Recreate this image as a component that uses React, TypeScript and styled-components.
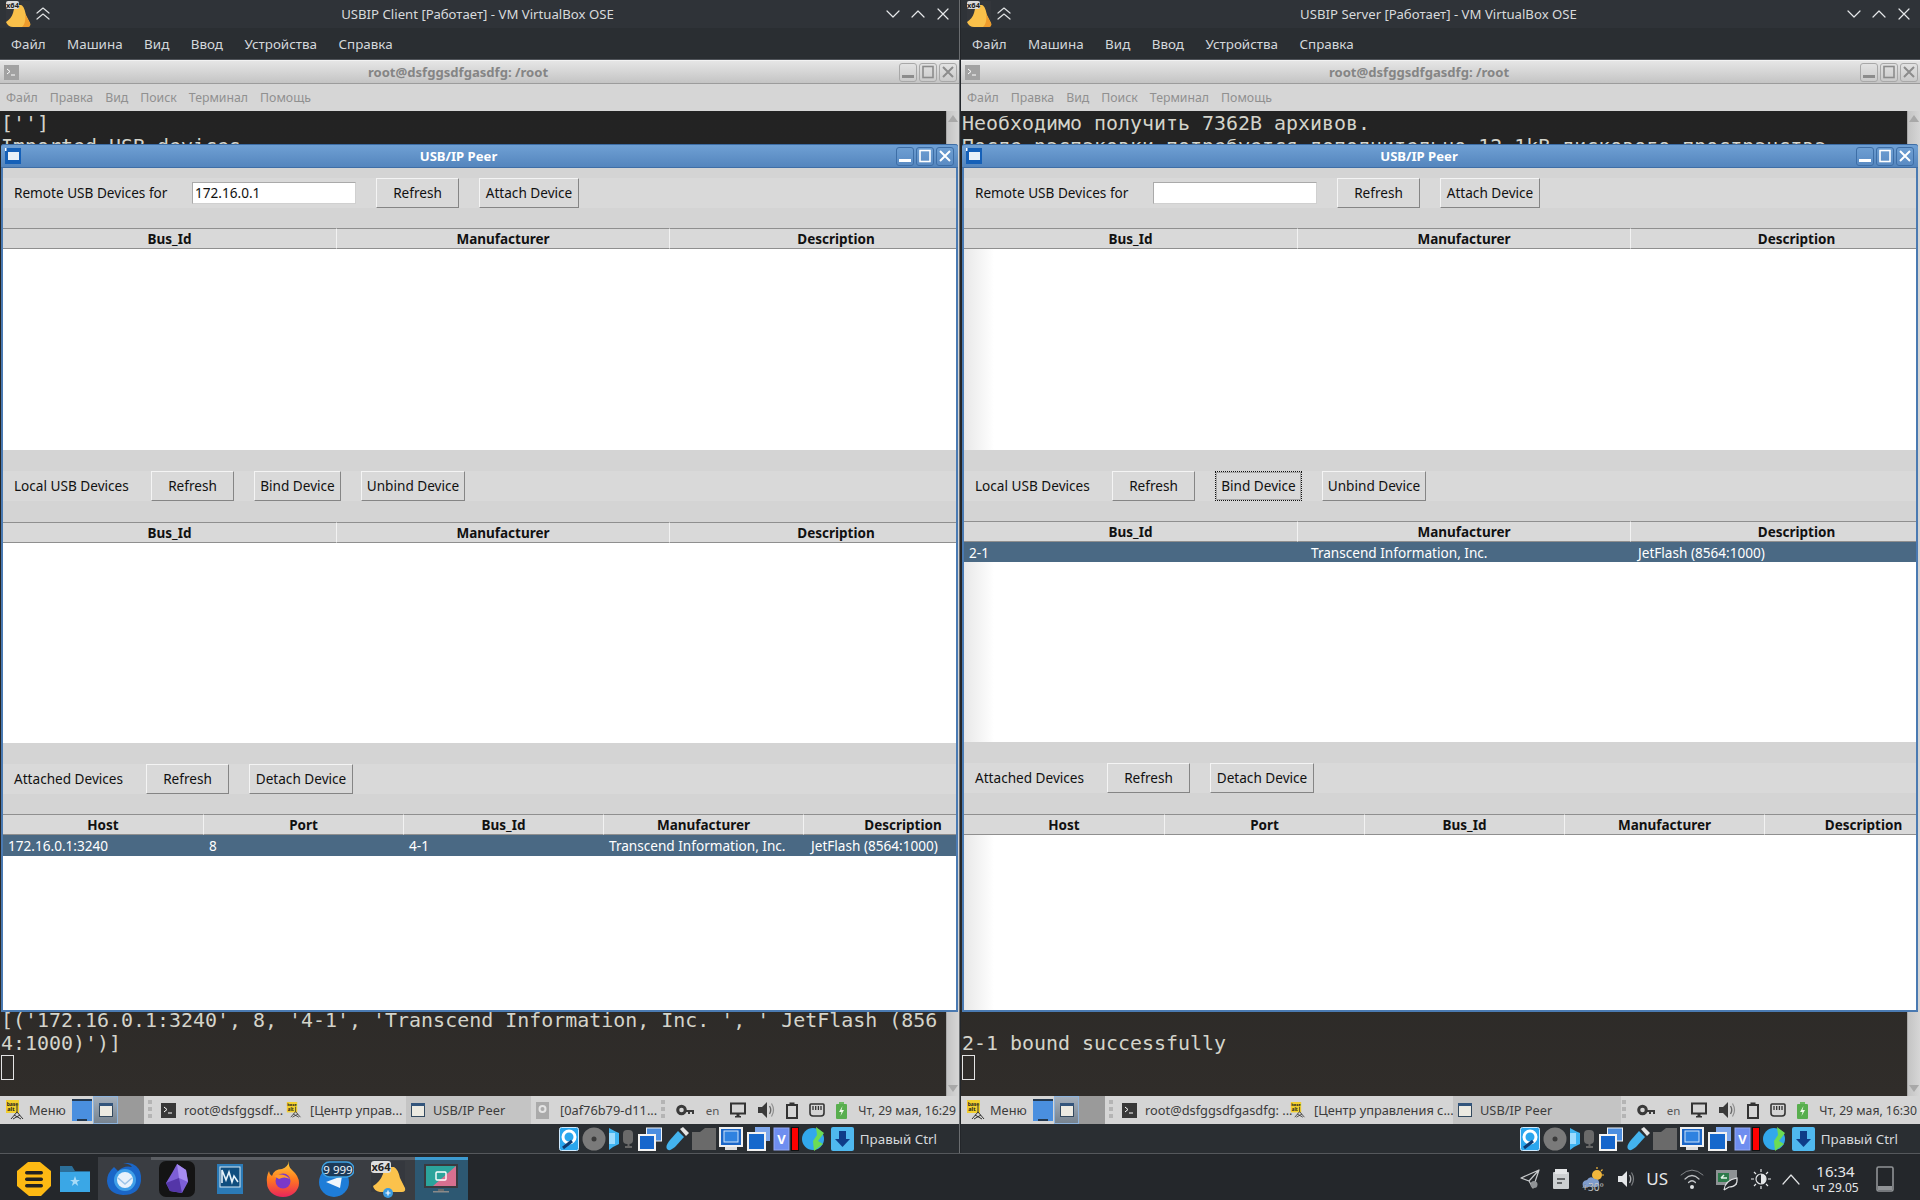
import React from 'react';
import styled, { createGlobalStyle } from 'styled-components';

const Global = createGlobalStyle`
  html, body { margin: 0; padding: 0; background: #23262a; }
  * { box-sizing: border-box; }
  body { font-family: "Noto Sans", "Liberation Sans", sans-serif; }
  svg { display: block; flex: none; }
`;

const Screen = styled.div`
  width: 1920px;
  height: 1200px;
  display: flex;
  flex-direction: column;
  overflow: hidden;
  background: #23262a;
`;
const Panes = styled.div`
  display: flex;
  gap: 1px;
  height: 1154px;
  border-bottom: 1px solid #55585c;
`;
const Pane = styled.div<{ $width: number; $divider?: boolean }>`
  position: relative;
  width: ${p => p.$width}px;
  display: flex;
  flex-direction: column;
  border-right: ${p => (p.$divider ? '1px solid #6a6d70' : 'none')};
`;
const VmTitleBar = styled.div`
  height: 28px;
  display: flex;
  align-items: center;
  padding: 0 8px 0 5px;
  background: #2f3338;
  color: #d8dadc;
  font-size: 13.2px;
`;
const VmTitle = styled.div`
  flex: 1;
  text-align: center;
  padding-left: 18px;
`;
const VmControls = styled.div`
  display: flex;
  gap: 11px;
  align-items: center;
  margin-right: 1px;
  color: #e6e8ea;
`;
const VmMenu = styled.div`
  height: 32px;
  display: flex;
  align-items: center;
  gap: 21.5px;
  padding: 1px 11px 0;
  background: #2a2e32;
  color: #d5d8dc;
  font-size: 13.4px;
  border-bottom: 1px solid #50545a;
`;
const TermTitleBar = styled.div`
  height: 24px;
  display: flex;
  align-items: center;
  padding: 0 2px 0 4px;
  background: linear-gradient(#e6e6e6, #c4c4c4);
  border-top: 1px solid #f2f2f2;
  border-bottom: 1px solid #9c9c9c;
  color: #858585;
  font-size: 13.1px;
  font-weight: 700;
`;
const TermTitle = styled.div`
  flex: 1;
  text-align: center;
  padding-right: 2px;
`;
const TermMenu = styled.div`
  height: 27px;
  display: flex;
  align-items: center;
  gap: 12px;
  padding: 0 6px;
  background: #d6d6d6;
  color: #909090;
  font-size: 12.3px;
`;
const Terminal = styled.div`
  flex: 1;
  min-height: 0;
  display: flex;
  background: linear-gradient(#232323 0%, #252423 60%, #302d2a 100%);
`;
const TermOutput = styled.div`
  flex: 1;
  display: flex;
  flex-direction: column;
  justify-content: space-between;
  padding: 1px 0 16px 1px;
  color: #d4d4cb;
  font-family: "DejaVu Sans Mono", "Liberation Mono", monospace;
  font-size: 19.95px;
  line-height: 23px;
  white-space: pre;
  overflow: hidden;
`;
const Cursor = styled.div`
  width: 13px;
  height: 25px;
  border: 1px solid #e4e4e4;
`;
const TermScroll = styled.div`
  width: 13px;
  display: flex;
  flex-direction: column;
  justify-content: space-between;
  align-items: center;
  padding: 4px 0;
  background: linear-gradient(90deg, #c4c4c4, #d6d6d6);
  border-left: 1px solid #a8a8a8;
`;
const PeerWindow = styled.section<{ $width: number }>`
  position: absolute;
  top: 144px;
  left: 1px;
  width: ${p => p.$width}px;
  height: 868px;
  display: flex;
  flex-direction: column;
  border: 2px solid #4a7ab2;
  border-top: 0;
  border-radius: 3px 3px 0 0;
  background: #d4d4d4;
`;
const PeerTitleBar = styled.div`
  height: 24px;
  margin: 0 -2px;
  display: flex;
  align-items: center;
  padding: 0 4px 0 4px;
  background: linear-gradient(#6fa0d4, #5485bd);
  border-top: 1px solid #3e6ea6;
  border-bottom: 1px solid #3f6ea6;
  border-radius: 3px 3px 0 0;
  color: #fff;
  font-size: 13.1px;
  font-weight: 700;
`;
const PeerTitle = styled.div`
  flex: 1;
  text-align: center;
  padding-right: 2px;
`;
const Controls = styled.div`
  display: flex;
  gap: 2px;
`;
const WinButton = styled.div<{ $tone: 'blue' | 'grey' }>`
  width: 18px;
  height: 19px;
  display: flex;
  align-items: center;
  justify-content: center;
  border-radius: 3px;
  border: 1px solid ${p => (p.$tone === 'blue' ? '#3e6ea6' : '#a8a8a8')};
  background: ${p => (p.$tone === 'blue' ? 'linear-gradient(#6d9ed2,#5a8bc3)' : 'linear-gradient(#e2e2e2,#cacaca)')};
`;
const Section = styled.div<{ $top: number; $gap: number; $fill?: boolean }>`
  padding-top: ${p => p.$top}px;
  flex: ${p => (p.$fill ? '1' : 'none')};
  display: flex;
  flex-direction: column;
  & > header { margin-bottom: ${p => p.$gap}px; }
`;
const Toolbar = styled.header`
  height: 30px;
  display: flex;
  align-items: center;
  gap: 20px;
  padding-left: 11px;
  background: #d9d9d9;
  font-size: 13.6px;
  color: #111;
`;
const ToolLabel = styled.span<{ $width: number }>`
  width: ${p => p.$width}px;
  margin: -2px -20px 0 0;
  white-space: nowrap;
`;
const AddressInput = styled.div`
  width: 164px;
  height: 22px;
  padding-left: 2px;
  line-height: 19px;
  background: #fff;
  border: 1px solid #d0d0d0;
  border-top-color: #aaa;
  border-left-color: #aaa;
`;
const ToolButton = styled.button<{ $width: number; $focused?: boolean }>`
  width: ${p => p.$width}px;
  height: 30px;
  padding: 0 0 2px;
  background: #d9d9d9;
  border: 1px solid;
  border-color: #f4f4f4 #858585 #858585 #f4f4f4;
  color: #111;
  font: inherit;
  white-space: nowrap;
  ${p => p.$focused && `
    border: 1px dotted #111;
    box-shadow: inset 0 0 0 1px #a8a8a8;
  `}
`;
const Table = styled.div<{ $bodyHeight?: number }>`
  display: flex;
  flex-direction: column;
  flex: ${p => (p.$bodyHeight ? 'none' : '1')};
  height: ${p => (p.$bodyHeight ? `${p.$bodyHeight + 21}px` : 'auto')};
`;
const Row = styled.div<{ $cols: string }>`
  display: grid;
  grid-template-columns: ${p => p.$cols};
`;
const HeadCell = styled.div`
  height: 21px;
  padding-top: 1px;
  line-height: 19px;
  text-align: center;
  font-size: 13.5px;
  font-weight: 700;
  color: #111;
  background: #d9d9d9;
  border-top: 1px solid #8f8f8f;
  border-bottom: 1px solid #8f8f8f;
  border-right: 1px solid #f2f2f2;
  &:last-child { padding-left: 46px; border-right: 0; }
`;
const TableBody = styled.div<{ $shade?: boolean }>`
  flex: 1;
  background: ${p => (p.$shade ? 'linear-gradient(90deg, #e8e8e8 0, #fff 30px)' : '#fff')};
`;
const SelectedRow = styled(Row)<{ $height: number }>`
  height: ${p => p.$height}px;
  align-items: center;
  background: #4a6984;
  color: #fff;
  font-size: 13.6px;
`;
const Cell = styled.div<{ $indent: number }>`
  padding-left: ${p => p.$indent}px;
  white-space: nowrap;
`;
const TaskPanel = styled.div`
  height: 28px;
  display: flex;
  align-items: center;
  background: #d5d5d5;
  color: #3c3c3c;
  font-size: 12.8px;
`;
const StartButton = styled.div`
  display: flex;
  align-items: center;
  gap: 4px;
  padding-left: 5px;
  width: 71px;
`;
const DesktopSwitch = styled.div<{ $active?: boolean }>`
  width: ${p => (p.$active ? 25 : 22)}px;
  height: 28px;
  display: flex;
  align-items: center;
  justify-content: center;
  background: ${p => (p.$active ? 'linear-gradient(#a3afbc,#77838f)' : 'transparent')};
  border: ${p => (p.$active ? '1px solid #8fb4dc' : '0')};
`;
const PagerGap = styled.div`
  width: 26px;
  height: 28px;
  background: #9a9a9a;
`;
const Handle = styled.div<{ $margin: number }>`
  width: 4px;
  height: 20px;
  margin: 0 ${p => p.$margin}px;
  background: repeating-linear-gradient(#b4b4b4 0 4px, transparent 4px 7px);
`;
const Task = styled.div<{ $width: number; $active?: boolean }>`
  width: ${p => p.$width}px;
  height: 28px;
  display: flex;
  align-items: center;
  gap: 8px;
  padding-left: 5px;
  white-space: nowrap;
  background: ${p => (p.$active ? '#c4c4c4' : 'transparent')};
`;
const Tray = styled.div`
  display: flex;
  align-items: center;
  gap: 11px;
  flex: 1;
  justify-content: flex-end;
  padding-right: 3px;
`;
const TrayLang = styled.span`
  font-size: 11.5px;
  color: #555;
`;
const TrayClock = styled.span`
  font-size: 12.2px;
  white-space: nowrap;
`;
const VmStatus = styled.div`
  height: 29px;
  flex: none;
  display: flex;
  align-items: center;
  justify-content: flex-end;
  gap: 3px;
  padding-right: 22px;
  background: #2a2e32;
  color: #d6d9dc;
  font-size: 13.4px;
`;
const HostKey = styled.span`
  margin-left: 3px;
  white-space: nowrap;
`;
const Dock = styled.footer`
  height: 45px;
  margin-top: 1px;
  display: flex;
  align-items: center;
  padding: 2px 0 0 0;
  background: #24272b;
`;
const DockStart = styled.div`
  width: 98px;
  height: 43px;
  padding-left: 16px;
  display: flex;
  align-items: center;
  gap: 8px;
`;
const DockTab = styled.div<{ $state?: 'open' | 'hover' | 'active' }>`
  width: 52.8px;
  height: 43px;
  display: flex;
  align-items: center;
  justify-content: center;
  padding-bottom: 3px;
  background: ${p => (p.$state === 'active' ? '#2d5872' : p.$state ? '#3a3d42' : 'transparent')};
  border-top: 3px solid ${p => (p.$state === 'active' ? '#3d9ad0' : p.$state === 'open' ? '#5b5e63' : 'transparent')};
`;
const HostTray = styled.div`
  flex: 1;
  display: flex;
  align-items: center;
  justify-content: flex-end;
  gap: 11.5px;
  padding-right: 26px;
  color: #e4e6e8;
`;
const HostLayout = styled.span`
  font-size: 17px;
`;
const HostClock = styled.div`
  width: 66px;
  margin: 0 -4px 0 -9px;
  text-align: center;
  line-height: 14px;
`;
const HostTime = styled.div`
  font-size: 15px;
  line-height: 19px;
`;
const HostDate = styled.div`
  font-size: 12px;
`;

const line = { fill: 'none', stroke: 'currentColor', strokeWidth: 1.5, strokeLinecap: 'round', strokeLinejoin: 'round' } as const;

const VBoxBlob = ({ size = 28 }: { size?: number }) => (
  <svg width={size} height={size} viewBox="0 0 28 28">
    <rect x="1" y="1" width="24" height="26" fill="#33363b" />
    <path d="M10 5 h6 c3 1 4 6 5 10 l4 8 c1 3 -1 4 -3 4 h-14 c-3 0 -6 -2 -7 -5 c3 -2 6 -5 7 -9z" fill="#f9c04a" />
    <path d="M20 14 l5 9 c1 3 -1 4 -3 4 h-5 c3 -3 4 -8 3 -13z" fill="#ee9b2c" />
    <rect x="1" y="1" width="13" height="8" rx="2" fill="#d9d9d9" />
    <text x="7.5" y="7.6" textAnchor="middle" fontSize="7.5" fontWeight="700" fontFamily="Noto Sans" fill="#222">x64</text>
  </svg>
);
const DoubleUp = () => (
  <svg width="16" height="16" viewBox="0 0 16 16" style={{ marginLeft: 2, color: '#dfe1e3' }}>
    <path d="M2 7 L8 2 L14 7 M2 13 L8 8 L14 13" {...line} strokeWidth={1.2} />
  </svg>
);
const VmButtons = () => (
  <VmControls>
    <svg width="14" height="14" viewBox="0 0 14 14"><path d="M1 4 L7 10 L13 4" {...line} strokeWidth={1.2} /></svg>
    <svg width="14" height="14" viewBox="0 0 14 14"><path d="M1 10 L7 4 L13 10" {...line} strokeWidth={1.2} /></svg>
    <svg width="14" height="14" viewBox="0 0 14 14"><path d="M2 2 L12 12 M12 2 L2 12" {...line} strokeWidth={1.2} /></svg>
  </VmControls>
);
const PeerIcon = () => (
  <svg width="16" height="16" viewBox="0 0 16 16" style={{ marginRight: 2 }}>
    <rect width="16" height="16" fill="#1560b8" />
    <rect x="3" y="4" width="11" height="8" fill="#e8f0f8" />
    <rect y="0" width="1.5" height="3" fill="#fff" />
  </svg>
);
const TermIcon = ({ color = '#a2a2a2' }: { color?: string }) => (
  <svg width="15" height="15" viewBox="0 0 15 15">
    <rect width="15" height="15" fill={color} />
    <path d="M3 4 L6 6.5 L3 9 M7 10 H11" fill="none" stroke="#fff" strokeWidth="1" />
  </svg>
);
const WinGlyph = ({ kind, color }: { kind: 'min' | 'max' | 'close'; color: string }) => (
  <svg width="14" height="14" viewBox="0 0 14 14">
    {kind === 'min' && <rect x="1" y="10" width="12" height="3" fill={color} />}
    {kind === 'max' && <rect x="2" y="1.5" width="10" height="11" fill="none" stroke={color} strokeWidth="1.6" />}
    {kind === 'close' && <path d="M2 2 L12 12 M12 2 L2 12" stroke={color} strokeWidth="2" />}
  </svg>
);
const WinControls = ({ tone }: { tone: 'blue' | 'grey' }) => {
  const color = tone === 'blue' ? '#fff' : '#8c8c8c';
  return (
    <Controls>
      <WinButton $tone={tone}><WinGlyph kind="min" color={color} /></WinButton>
      <WinButton $tone={tone}><WinGlyph kind="max" color={color} /></WinButton>
      <WinButton $tone={tone}><WinGlyph kind="close" color={color} /></WinButton>
    </Controls>
  );
};
const BaseAlt = ({ size = 20 }: { size?: number }) => (
  <svg width={size} height={size} viewBox="0 0 20 20">
    <rect x="1" y="0" width="13" height="13" fill="#f2cf2e" />
    <text x="7.5" y="5.5" textAnchor="middle" fontSize="5" fontWeight="700" fontFamily="Noto Sans" fill="#222">base</text>
    <text x="6" y="11" textAnchor="middle" fontSize="5.5" fontWeight="700" fontFamily="Noto Sans" fill="#222">alt</text>
    <path d="M12 6 V12 M12 12 L6 19 M12 12 L18 19 M9 15 L16 19 M15 15 L8 19" stroke="#333" strokeWidth="1" fill="none" />
  </svg>
);
const PagerDesktop = () => (
  <svg width="20" height="22" viewBox="0 0 20 22">
    <rect width="20" height="22" fill="#4a8fdf" />
    <rect width="20" height="2" fill="#23384f" />
    <rect x="5" y="20" width="10" height="2" fill="#23384f" />
  </svg>
);
const PagerWindow = () => (
  <svg width="14" height="14" viewBox="0 0 14 14">
    <rect x="0.5" y="0.5" width="13" height="13" fill="#eceae2" stroke="#33495f" />
    <rect x="0" y="0" width="14" height="3" fill="#33557c" />
  </svg>
);
const KeyIcon = () => (
  <svg width="19" height="12" viewBox="0 0 19 12">
    <circle cx="5.5" cy="6" r="3.8" fill="none" stroke="#3a3a3a" strokeWidth="3" />
    <path d="M9 6 H18 V10 H16 V8 H14 V10 H12 V8 H9z" fill="#3a3a3a" />
  </svg>
);
const MonitorIcon = () => (
  <svg width="16" height="16" viewBox="0 0 16 16">
    <rect x="1" y="1.5" width="14" height="10" fill="none" stroke="#333" strokeWidth="2" />
    <rect x="6.5" y="12" width="3" height="2" fill="#333" /><rect x="5" y="14" width="6" height="1.5" fill="#333" />
  </svg>
);
const SpeakerIcon = ({ color = '#3a3a3a' }: { color?: string }) => (
  <svg width="18" height="20" viewBox="0 0 18 20">
    <path d="M1 7 H5 L10 2 V18 L5 13 H1z" fill={color} />
    <path d="M12.5 6 Q15 10 12.5 14" fill="none" stroke={color} strokeOpacity=".7" strokeWidth="1.4" />
    <path d="M14.5 3.5 Q18.5 10 14.5 16.5" fill="none" stroke={color} strokeOpacity=".45" strokeWidth="1.2" />
  </svg>
);
const ClipIcon = () => (
  <svg width="12" height="17" viewBox="0 0 12 17">
    <rect x="1" y="3" width="10" height="13" fill="none" stroke="#333" strokeWidth="2" />
    <rect x="3.5" y="0.5" width="5" height="3.5" fill="#333" />
  </svg>
);
const NetIcon = () => (
  <svg width="16" height="15" viewBox="0 0 16 15">
    <path d="M2 1 H14 Q15 1 15 2 V10 Q15 13 12 13 H4 Q1 13 1 10 V2 Q1 1 2 1z" fill="none" stroke="#333" strokeWidth="1.6" />
    <path d="M4 3 V7 M6.7 3 V7 M9.4 3 V7 M12 3 V7" stroke="#333" strokeWidth="1.3" />
  </svg>
);
const BatteryIcon = () => (
  <svg width="11" height="17" viewBox="0 0 11 17">
    <rect x="3" y="0" width="5" height="2" fill="#6cbb62" />
    <rect x="0" y="2" width="11" height="15" rx="1" fill="#58ae4e" />
    <path d="M6.5 4 L3 10 H5.5 L4.5 14 L8 8 H5.5z" fill="#f0f8ea" />
  </svg>
);

const HddIcon = () => (
  <svg width="20" height="24" viewBox="0 0 20 24">
    <rect x="0.5" y="0.5" width="19" height="23" rx="2" fill="#2aa6ee" stroke="#cfeaff" />
    <circle cx="10" cy="10" r="6" fill="none" stroke="#fff" strokeWidth="3" />
    <path d="M13 14 L4 21" stroke="#113a70" strokeWidth="3" />
  </svg>
);
const DiscIcon = () => (
  <svg width="24" height="24" viewBox="0 0 24 24">
    <circle cx="12" cy="12" r="11.5" fill="#7a7a7a" />
    <circle cx="12" cy="12" r="2.5" fill="#3a3a3a" />
  </svg>
);
const AudioIcon = () => (
  <svg width="26" height="24" viewBox="0 0 26 24">
    <rect x="14" y="3" width="10" height="14" rx="4" fill="#6a6a6a" />
    <path d="M16 20 H23 M19.5 17 V20" stroke="#666" strokeWidth="2" />
    <path d="M0 1 Q7 5 10 6 V17 Q5 19 0 23z" fill="#3fb4f2" />
    <rect x="0" y="6" width="6" height="11" fill="#9ddcff" />
  </svg>
);
const WindowsIcon = () => (
  <svg width="24" height="24" viewBox="0 0 24 24">
    <rect x="8.5" y="1" width="15" height="13" fill="#4c8ee0" stroke="#f0f4f8" />
    <rect x="1" y="8" width="16" height="15" fill="#1666cc" stroke="#f4f4f4" strokeWidth="2" />
  </svg>
);
const UsbIcon = () => (
  <svg width="24" height="24" viewBox="0 0 24 24">
    <path d="M13 4 L19 10 L10 20 Q4 25 2 22 Q0 19 5 13z" fill="#43b3ee" />
    <path d="M15 2 L18 0 L24 6 L21 9z" fill="#e4e4e4" />
  </svg>
);
const FolderIcon = () => (
  <svg width="24" height="24" viewBox="0 0 24 24">
    <path d="M0 5 L8 5 L13 1 H24 V23 H0z" fill="#6a6a6a" />
  </svg>
);
const DisplayIcon = () => (
  <svg width="24" height="24" viewBox="0 0 24 24">
    <rect x="1" y="1" width="22" height="18" fill="#1a66c8" stroke="#f0f0f0" strokeWidth="2" />
    <rect x="5" y="4" width="14" height="11" fill="#2f82e0" stroke="#cfe4fa" />
    <rect x="6" y="20" width="12" height="3" fill="#ddd" />
  </svg>
);
const CaptureIcon = () => (
  <svg width="24" height="24" viewBox="0 0 24 24">
    <rect x="9" y="0" width="15" height="14" fill="#7fa8ec" />
    <rect x="2" y="6" width="17" height="17" fill="#1668cc" stroke="#f2f2f2" strokeWidth="2" />
  </svg>
);
const VtIcon = () => (
  <svg width="26" height="24" viewBox="0 0 26 24">
    <rect x="1" y="1" width="15" height="22" fill="#6f8ef0" stroke="#94a8f4" />
    <text x="8.5" y="17" textAnchor="middle" fontSize="13" fontWeight="700" fontFamily="Noto Sans" fill="#fff">V</text>
    <rect x="18.5" y="0.5" width="7" height="23" fill="#f00" stroke="#111" />
  </svg>
);
const SwirlIcon = () => (
  <svg width="26" height="24" viewBox="0 0 26 24">
    <circle cx="11" cy="12" r="11" fill="#32a8ec" />
    <path d="M14 0 L22 6 L16 14 L21 17 L12 24 L11 14 L15 8z" fill="#6cdc54" />
  </svg>
);
const DownloadIcon = () => (
  <svg width="23" height="24" viewBox="0 0 23 24">
    <rect width="23" height="24" rx="2" fill="#4fb8ee" />
    <path d="M8 4 H15 V12 H19 L11.5 20 L4 12 H8z" fill="#0e3c88" />
  </svg>
);

const StatusIcons = () => (
  <>
    <HddIcon /><DiscIcon /><AudioIcon /><WindowsIcon /><UsbIcon /><FolderIcon />
    <DisplayIcon /><CaptureIcon /><VtIcon /><SwirlIcon /><DownloadIcon />
  </>
);

const ShortTable = ({ cols, headers, selected, indents, bodyHeight, shade, rowHeight = 21 }: {
  cols: string;
  headers: string[];
  selected?: string[];
  indents?: number[];
  bodyHeight?: number;
  shade?: boolean;
  rowHeight?: number;
}) => (
  <Table $bodyHeight={bodyHeight}>
    <Row $cols={cols}>
      {headers.map(h => <HeadCell key={h}>{h}</HeadCell>)}
    </Row>
    {selected && (
      <SelectedRow $cols={cols} $height={rowHeight}>
        {selected.map((c, i) => <Cell key={c} $indent={indents ? indents[i] : 5}>{c}</Cell>)}
      </SelectedRow>
    )}
    <TableBody $shade={shade} />
  </Table>
);

const threeHeaders = ['Bus_Id', 'Manufacturer', 'Description'];
const fiveHeaders = ['Host', 'Port', 'Bus_Id', 'Manufacturer', 'Description'];
const threeCols = '334px 333px 1fr';
const fiveCols = '201px 200px 200px 200px 1fr';

type PaneConfig = {
  side: 'client' | 'server';
  title: string;
  lastTime: string;
  topLines: string[];
  bottomLines: string[];
  address: string;
  tasks: { label: string; icon: 'term' | 'base' | 'win' | 'disk'; active?: boolean }[];
  taskWidth: number;
};

const TaskIcon = ({ kind }: { kind: string }) => {
  if (kind === 'term') return <TermIcon color="#383838" />;
  if (kind === 'base') return <BaseAlt size={16} />;
  if (kind === 'win') return <PagerWindow />;
  return (
    <svg width="13" height="17" viewBox="0 0 13 17" style={{ marginRight: 3 }}>
      <rect width="13" height="17" fill="#aaa" />
      <circle cx="6.5" cy="7" r="3" fill="none" stroke="#e4e4e4" strokeWidth="2" />
    </svg>
  );
};

const VmPane = ({ cfg }: { cfg: PaneConfig }) => {
  const server = cfg.side === 'server';
  return (
    <Pane $width={server ? 959 : 960} $divider={!server}>
      <VmTitleBar>
        <VBoxBlob />
        <DoubleUp />
        <VmTitle>{cfg.title}</VmTitle>
        <VmButtons />
      </VmTitleBar>
      <VmMenu>
        {['Файл', 'Машина', 'Вид', 'Ввод', 'Устройства', 'Справка'].map(m => <span key={m}>{m}</span>)}
      </VmMenu>
      <TermTitleBar>
        <TermIcon />
        <TermTitle>root@dsfggsdfgasdfg: /root</TermTitle>
        <WinControls tone="grey" />
      </TermTitleBar>
      <TermMenu>
        {['Файл', 'Правка', 'Вид', 'Поиск', 'Терминал', 'Помощь'].map(m => <span key={m}>{m}</span>)}
      </TermMenu>
      <Terminal>
        <TermOutput>
          <div>{cfg.topLines.map(l => <div key={l}>{l}</div>)}</div>
          <div>
            {cfg.bottomLines.map((l, i) => <div key={i}>{l || ' '}</div>)}
            <Cursor />
          </div>
        </TermOutput>
        <TermScroll>
          <svg width="10" height="7" viewBox="0 0 10 7"><path d="M5 0 L10 7 H0z" fill="#a8a8a8" /></svg>
          <svg width="10" height="7" viewBox="0 0 10 7"><path d="M5 7 L10 0 H0z" fill="#a8a8a8" /></svg>
        </TermScroll>
      </Terminal>
      <TaskPanel>
        <StartButton><BaseAlt /><span>Меню</span></StartButton>
        <DesktopSwitch><PagerDesktop /></DesktopSwitch>
        <DesktopSwitch $active><PagerWindow /></DesktopSwitch>
        <PagerGap />
        <Handle $margin={4} />
        {cfg.tasks.map(t => (
          <Task key={t.label} $width={cfg.taskWidth} $active={t.active}>
            <TaskIcon kind={t.icon} />
            <span>{t.label}</span>
          </Task>
        ))}
        <Tray>
          <Handle $margin={0} />
          <KeyIcon />
          <TrayLang>en</TrayLang>
          <MonitorIcon />
          <SpeakerIcon />
          <ClipIcon />
          <NetIcon />
          <BatteryIcon />
          <TrayClock>{cfg.lastTime}</TrayClock>
        </Tray>
      </TaskPanel>
      <VmStatus>
        <StatusIcons />
        <HostKey>Правый Ctrl</HostKey>
      </VmStatus>
      <PeerWindow $width={server ? 956 : 957}>
        <PeerTitleBar>
          <PeerIcon />
          <PeerTitle>USB/IP Peer</PeerTitle>
          <WinControls tone="blue" />
        </PeerTitleBar>
        <Section $top={10} $gap={20}>
          <Toolbar>
            <ToolLabel $width={178}>Remote USB Devices for</ToolLabel>
            <AddressInput>{cfg.address}</AddressInput>
            <ToolButton $width={83}>Refresh</ToolButton>
            <ToolButton $width={100}>Attach Device</ToolButton>
          </Toolbar>
          <ShortTable cols={threeCols} headers={threeHeaders} bodyHeight={201} shade={server} />
        </Section>
        <Section $top={21} $gap={server ? 20 : 21}>
          <Toolbar>
            <ToolLabel $width={137}>Local USB Devices</ToolLabel>
            <ToolButton $width={83}>Refresh</ToolButton>
            <ToolButton $width={87} $focused={server}>Bind Device</ToolButton>
            <ToolButton $width={104}>Unbind Device</ToolButton>
          </Toolbar>
          <ShortTable
            cols={threeCols}
            headers={threeHeaders}
            bodyHeight={200}
            shade={server}
            rowHeight={server ? 20 : 21}
            selected={server ? ['2-1', 'Transcend Information, Inc.', 'JetFlash (8564:1000)'] : undefined}
            indents={[5, 13, 7]}
          />
        </Section>
        <Section $top={21} $gap={server ? 21 : 20} $fill>
          <Toolbar>
            <ToolLabel $width={132}>Attached Devices</ToolLabel>
            <ToolButton $width={83}>Refresh</ToolButton>
            <ToolButton $width={104}>Detach Device</ToolButton>
          </Toolbar>
          <ShortTable
            cols={fiveCols}
            headers={fiveHeaders}
            shade={server}
            selected={server ? undefined : ['172.16.0.1:3240', '8', '4-1', 'Transcend Information, Inc.', 'JetFlash (8564:1000)']}
            indents={[5, 5, 5, 5, 7]}
          />
        </Section>
      </PeerWindow>
    </Pane>
  );
};

const clientPane: PaneConfig = {
  side: 'client',
  title: 'USBIP Client [Работает] - VM VirtualBox OSE',
  lastTime: 'Чт, 29 мая, 16:29',
  topLines: ["['']", 'Imported USB devices'],
  bottomLines: ["[('172.16.0.1:3240', 8, '4-1', 'Transcend Information, Inc. ', ' JetFlash (856", "4:1000)')]"],
  address: '172.16.0.1',
  taskWidth: 125,
  tasks: [
    { label: 'root@dsfggsdf...', icon: 'term' },
    { label: '[Центр управ...', icon: 'base' },
    { label: 'USB/IP Peer', icon: 'win', active: true },
    { label: '[0af76b79-d11...', icon: 'disk' },
  ],
};
const serverPane: PaneConfig = {
  side: 'server',
  title: 'USBIP Server [Работает] - VM VirtualBox OSE',
  lastTime: 'Чт, 29 мая, 16:30',
  topLines: ['Необходимо получить 7362B архивов.', 'После распаковки потребуется дополнительно 12,1kB дискового пространства.'],
  bottomLines: ['', '2-1 bound successfully'],
  address: '',
  taskWidth: 168,
  tasks: [
    { label: 'root@dsfggsdfgasdfg: ...', icon: 'term' },
    { label: '[Центр управления с...', icon: 'base' },
    { label: 'USB/IP Peer', icon: 'win', active: true },
  ],
};

const HostApp = ({ children, state }: { children: React.ReactNode; state?: 'open' | 'hover' | 'active' }) => (
  <DockTab $state={state}>{children}</DockTab>
);

export default function App() {
  return (
    <Screen>
      <Global />
      <Panes>
        <VmPane cfg={clientPane} />
        <VmPane cfg={serverPane} />
      </Panes>
      <Dock>
        <DockStart>
          <svg width="36" height="36" viewBox="0 0 36 36">
            <path d="M12 1 H24 L35 10 V25 L25 35 H13 L1 25 V10z" fill="#fdb913" />
            <rect x="9" y="10" width="18" height="3.5" rx="1.7" fill="#222" />
            <rect x="9" y="16.5" width="18" height="3.5" rx="1.7" fill="#222" />
            <rect x="9" y="23" width="18" height="3.5" rx="1.7" fill="#222" />
          </svg>
          <svg width="30" height="30" viewBox="0 0 30 30">
            <path d="M0 2 H12 L15 7 H30 V28 H0z" fill="#2c6f99" />
            <rect y="8" width="30" height="20" fill="#3aa7e6" />
            <path d="M15 12 L16.4 16 H20 L17 18 L18.2 22 L15 19.6 L11.8 22 L13 18 L10 16 H13.6z" fill="#a8dcf8" />
          </svg>
        </DockStart>
        <HostApp state="hover">
          <svg width="36" height="36" viewBox="0 0 36 36">
            <path d="M8 6 Q1 12 1 20 Q2 33 17 34 Q33 34 35 20 Q36 10 30 5 Q24 0 17 3 Q23 2 26 6 Q18 4 12 10z" fill="#1a66c8" />
            <circle cx="19" cy="19" r="11" fill="#3f9fe8" />
            <circle cx="19" cy="19" r="8" fill="#e8f2fb" />
            <path d="M12 17 L19 23 L26 17" stroke="#9cc4e8" fill="none" strokeWidth="1.6" />
          </svg>
        </HostApp>
        <HostApp state="open">
          <svg width="36" height="36" viewBox="0 0 36 36">
            <rect width="36" height="36" rx="7" fill="#141414" />
            <path d="M18 3 L27 9 L29 21 L23 32 L11 30 L7 22 L13 12z" fill="#7d5fd6" />
            <path d="M18 3 L27 9 L29 21 L20 17z" fill="#a68cf0" />
            <path d="M7 22 L20 17 L23 32 L11 30z" fill="#5436a8" />
          </svg>
        </HostApp>
        <HostApp state="open">
          <svg width="26" height="30" viewBox="0 0 26 30">
            <rect width="26" height="30" fill="#2b7ab6" />
            <rect x="3" y="3" width="20" height="20" fill="#0f4d7e" stroke="#d6e8f4" />
            <path d="M5 19 V6 L9 16 L12 8 L15 18 L17 12 L21 18" stroke="#e6f2fa" fill="none" strokeWidth="1.6" />
          </svg>
        </HostApp>
        <HostApp state="open">
          <svg width="34" height="36" viewBox="0 0 34 36">
            <defs>
              <linearGradient id="ff" x1="0" y1="0" x2="0" y2="1">
                <stop offset="0" stopColor="#ffd23c" />
                <stop offset=".5" stopColor="#ff7a1e" />
                <stop offset="1" stopColor="#e9245c" />
              </linearGradient>
            </defs>
            <path d="M23 0 Q22 6 26 9 Q33 15 33 22 A16 14 0 0 1 1 22 Q0 16 3 10 Q3 13 6 15 Q8 8 16 8 Q22 6 23 0z" fill="url(#ff)" />
            <circle cx="17" cy="20" r="7.5" fill="#7a38c8" />
            <path d="M8 15 Q17 11 24 18 Q18 15 13 18z" fill="#ff9a2e" />
          </svg>
        </HostApp>
        <HostApp state="open">
          <svg width="36" height="36" viewBox="0 0 36 36">
            <circle cx="16" cy="21" r="15" fill="#1e7dd8" />
            <path d="M8 21 L24 15 L22 27z" fill="#f0f6fb" />
            <rect x="4" y="1" width="32" height="15" rx="7.5" fill="#1c3a58" stroke="#3ea0e0" strokeWidth="1.4" />
            <text x="20" y="12.5" textAnchor="middle" fontSize="11.5" fontFamily="Noto Sans" fill="#f0f4f8">9 999</text>
          </svg>
        </HostApp>
        <HostApp state="open">
          <svg width="36" height="38" viewBox="0 0 36 38">
            <rect x="1" y="1" width="34" height="31" fill="#35383e" />
            <path d="M14 7 H24 Q28 9 30 18 L35 28 Q36 32 32 32 H10 Q4 31 3 26 Q10 22 13 14z" fill="#fbc24c" />
            <rect x="1" y="1" width="20" height="12" rx="3" fill="#dedede" />
            <text x="11" y="11" textAnchor="middle" fontSize="11" fontWeight="700" fontFamily="Noto Sans" fill="#222">x64</text>
            <circle cx="18" cy="33" r="5" fill="#3b9be0" />
            <path d="M15.5 33 H20.5 M18 30.5 V35.5" stroke="#fff" strokeWidth="1.2" />
          </svg>
        </HostApp>
        <HostApp state="active">
          <svg width="36" height="32" viewBox="0 0 36 32">
            <rect x="1" y="1" width="34" height="24" fill="#3a3a3f" />
            <rect x="3" y="3" width="30" height="20" fill="#2ca49c" />
            <path d="M33 3 V23 H10z" fill="#d87090" />
            <rect x="13" y="9" width="10" height="8" rx="1" fill="none" stroke="#fff" strokeWidth="1.4" />
            <rect x="15" y="26" width="6" height="2" fill="#6a6a6a" />
            <rect x="10" y="28" width="16" height="1.5" fill="#8a8a8a" />
          </svg>
        </HostApp>
        <HostTray>
          <svg width="20" height="20" viewBox="0 0 20 20" style={{ color: '#c8cacc' }}>
            <path d="M19 1 L1 9 L9 12 L13 19z M19 1 L9 12" {...line} strokeWidth={1.2} />
            <circle cx="14" cy="15.5" r="3.5" fill="#909396" />
          </svg>
          <svg width="18" height="22" viewBox="0 0 18 22">
            <rect x="1" y="4" width="16" height="17" rx="1" fill="#cdd0d2" />
            <rect x="3" y="1" width="12" height="5" fill="#e4e6e8" />
            <path d="M5 11 H13 M5 15 H10" stroke="#404346" strokeWidth="1.6" />
          </svg>
          <svg width="24" height="24" viewBox="0 0 24 24">
            <circle cx="16" cy="8" r="5" fill="#f2b73c" />
            <path d="M16 0 V2 M23 8 H21 M21.5 2.5 L20 4" stroke="#f2b73c" strokeWidth="1.2" />
            <path d="M2 20 Q0 14 6 13 Q9 8 14 12 Q19 12 18 18 L16 20z" fill="#7f9ccc" />
            <text x="12" y="23.5" textAnchor="middle" fontSize="10" fontFamily="Noto Sans" fill="#f0f0f0" stroke="#23262a" strokeWidth=".2">+30°</text>
          </svg>
          <SpeakerIcon color="#e4e6e8" />
          <HostLayout>US</HostLayout>
          <svg width="24" height="22" viewBox="0 0 24 22" style={{ color: '#c0c3c6' }}>
            <path d="M1 7 Q12 -3 23 7" {...line} strokeWidth={1} strokeOpacity={0.6} />
            <path d="M5 11 Q12 4 19 11" {...line} strokeWidth={1.2} />
            <path d="M8.5 14.5 Q12 11 15.5 14.5" {...line} strokeWidth={1.2} />
            <circle cx="12" cy="19" r="2" fill="#e0e2e4" />
          </svg>
          <svg width="24" height="24" viewBox="0 0 24 24">
            <rect x="1" y="3" width="21" height="15" fill="#8e9295" />
            <rect x="3" y="6" width="11" height="9" fill="#2c7a4a" />
            <path d="M6 11 H12 M6 11 L9 8" stroke="#e6f6ea" strokeWidth="1.5" />
            <path d="M9 23 Q10 13 22 11 Q23 20 14 20 L9 23" fill="#23262a" stroke="#dfe1e3" strokeWidth="1.2" />
          </svg>
          <svg width="20" height="20" viewBox="0 0 20 20">
            <path d="M10 5 A5 5 0 0 1 10 15z" fill="#e4e6e8" />
            <circle cx="10" cy="10" r="5" fill="none" stroke="#e4e6e8" strokeWidth="1.2" />
            <path d="M10 0 V3 M10 17 V20 M0 10 H3 M17 10 H20 M3 3 L5 5 M15 15 L17 17 M17 3 L15 5 M3 17 L5 15" stroke="#e4e6e8" strokeWidth="1.2" />
          </svg>
          <svg width="18" height="12" viewBox="0 0 18 12" style={{ color: '#e0e2e4' }}>
            <path d="M1 11 L9 2 L17 11" {...line} strokeWidth={1.2} />
          </svg>
          <HostClock>
            <HostTime>16:34</HostTime>
            <HostDate>чт 29.05</HostDate>
          </HostClock>
          <svg width="18" height="26" viewBox="0 0 18 26">
            <rect x="1" y="1" width="16" height="24" rx="1.5" fill="#23262a" stroke="#909396" strokeWidth="1.6" />
            <rect x="2" y="20" width="14" height="4" fill="#909396" />
          </svg>
        </HostTray>
      </Dock>
    </Screen>
  );
}
